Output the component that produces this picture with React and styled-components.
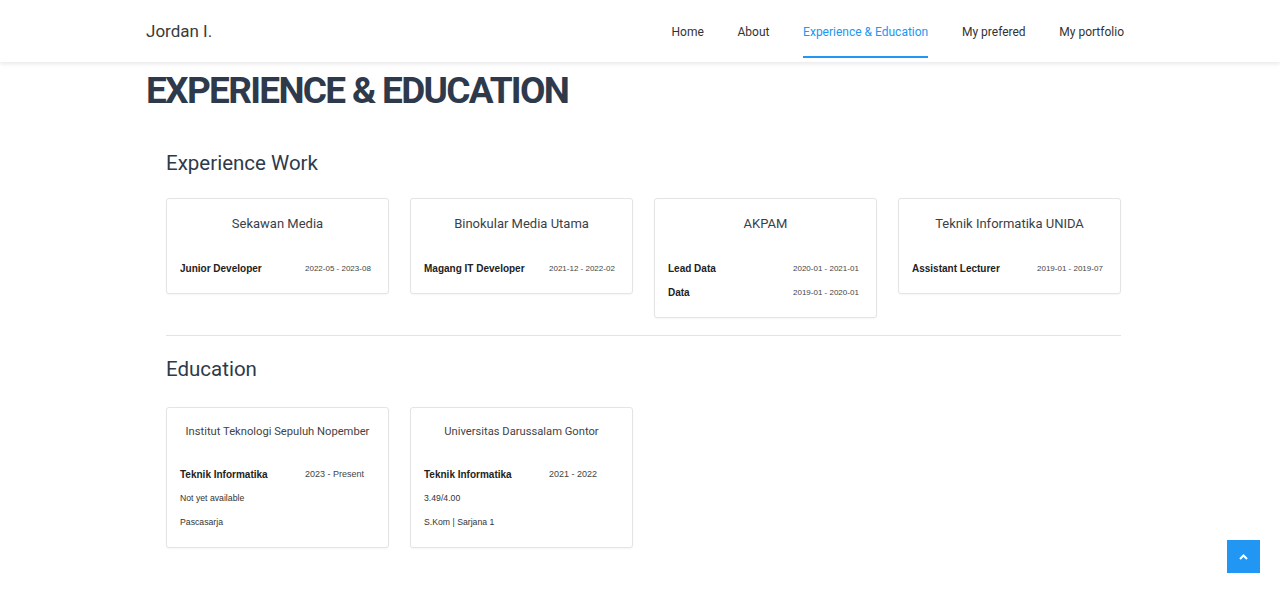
import React from "react";
import styled, { createGlobalStyle } from "styled-components";

const GlobalStyle = createGlobalStyle`
  html, body { margin: 0; padding: 0; background: #fff; }
  body { font-family: Roboto, "Liberation Sans", Arial, sans-serif; color: #333; }
  * { box-sizing: border-box; }
`;

const Header = styled.header`
  height: 62px;
  background: #fff;
  box-shadow: 0 2px 4px rgba(0, 0, 0, 0.09);
  position: relative;
  z-index: 2;
`;

const HeaderInner = styled.div`
  width: 978px;
  margin-left: 146px;
  height: 100%;
  display: flex;
  align-items: flex-start;
  justify-content: space-between;
`;

const Brand = styled.div`
  font-size: 17px;
  color: #3a3a3a;
  line-height: 62px;
`;

const Nav = styled.nav`
  display: flex;
  gap: 33.7px;
`;

const NavLink = styled.a`
  height: 58px;
  padding-top: 7px;
  display: flex;
  align-items: center;
  font-size: 12px;
  color: ${(p) => (p.$active ? "#2196f3" : "#333")};
  border-bottom: 2px solid ${(p) => (p.$active ? "#2196f3" : "transparent")};
  text-decoration: none;
  white-space: nowrap;
`;

const Main = styled.main`
  width: 978px;
  margin-left: 146px;
  padding-bottom: 60px;
`;

const PageTitle = styled.h1`
  margin: 6px 0 0;
  font-size: 37px;
  line-height: 46px;
  font-weight: 700;
  letter-spacing: -1.7px;
  color: #2e3a4b;
`;

const Section = styled.section`
  margin-left: 20px;
  width: 955px;
`;

const SectionTitle = styled.h2`
  margin: ${(p) => p.$mt} 0 ${(p) => p.$mb};
  font-size: 20.5px;
  line-height: 25px;
  font-weight: 400;
  color: #2e3a4b;
`;

const CardGrid = styled.div`
  display: grid;
  grid-template-columns: repeat(4, 223px);
  gap: 21px;
  align-items: start;
`;

const Card = styled.div`
  background: #fff;
  border: 1px solid #e4e4e4;
  border-radius: 3px;
  box-shadow: 0 1px 2px rgba(0, 0, 0, 0.04);
  padding: 16px 13px 18px;
`;

const CardTitle = styled.div`
  text-align: center;
  white-space: nowrap;
  font-size: ${(p) => (p.$small ? "11.2px" : "13px")};
  line-height: ${(p) => (p.$small ? "15px" : "17px")};
  color: ${(p) => (p.$small ? "#444" : "#3a3f48")};
  margin-bottom: ${(p) => (p.$small ? "28px" : "29px")};
`;

const Rows = styled.div`
  display: flex;
  flex-direction: column;
  gap: ${(p) => p.$gap};
`;

const Row = styled.div`
  display: grid;
  grid-template-columns: 125px 1fr;
  align-items: center;
  height: 14px;
  font-family: "Liberation Sans", Arial, sans-serif;
`;

const Label = styled.span`
  font-size: 10px;
  font-weight: 700;
  color: #222;
  white-space: nowrap;
`;

const DateText = styled.span`
  font-size: ${(p) => (p.$big ? "9px" : "8px")};
  color: #444;
  white-space: nowrap;
`;

const Note = styled.div`
  height: 14px;
  display: flex;
  align-items: center;
  font-family: "Liberation Sans", Arial, sans-serif;
  font-size: 8.7px;
  color: #333;
`;

const Divider = styled.hr`
  border: none;
  border-top: 1px solid #e3e3e3;
  margin: 17px 0 0;
`;

const ScrollTop = styled.button`
  position: fixed;
  right: 20px;
  bottom: 40px;
  width: 33px;
  height: 33px;
  border: none;
  background: #2196f3;
  display: flex;
  align-items: center;
  justify-content: center;
  padding: 0;
  cursor: pointer;
`;

const experience = [
  { name: "Sekawan Media", roles: [["Junior Developer", "2022-05 - 2023-08"]] },
  { name: "Binokular Media Utama", roles: [["Magang IT Developer", "2021-12 - 2022-02"]] },
  {
    name: "AKPAM",
    roles: [
      ["Lead Data", "2020-01 - 2021-01"],
      ["Data", "2019-01 - 2020-01"],
    ],
  },
  { name: "Teknik Informatika UNIDA", roles: [["Assistant Lecturer", "2019-01 - 2019-07"]] },
];

const education = [
  {
    name: "Institut Teknologi Sepuluh Nopember",
    major: "Teknik Informatika",
    period: "2023 - Present",
    notes: ["Not yet available", "Pascasarja"],
  },
  {
    name: "Universitas Darussalam Gontor",
    major: "Teknik Informatika",
    period: "2021 - 2022",
    notes: ["3.49/4.00", "S.Kom | Sarjana 1"],
  },
];

export default function App() {
  return (
    <>
      <GlobalStyle />
      <Header>
        <HeaderInner>
          <Brand>Jordan I.</Brand>
          <Nav>
            <NavLink href="#">Home</NavLink>
            <NavLink href="#">About</NavLink>
            <NavLink href="#" $active>
              Experience &amp; Education
            </NavLink>
            <NavLink href="#">My prefered</NavLink>
            <NavLink href="#">My portfolio</NavLink>
          </Nav>
        </HeaderInner>
      </Header>
      <Main>
        <PageTitle>EXPERIENCE &amp; EDUCATION</PageTitle>
        <Section>
          <SectionTitle $mt="37px" $mb="22px">
            Experience Work
          </SectionTitle>
          <CardGrid>
            {experience.map((c) => (
              <Card key={c.name}>
                <CardTitle>{c.name}</CardTitle>
                <Rows $gap="10px">
                  {c.roles.map(([r, d]) => (
                    <Row key={r}>
                      <Label>{r}</Label>
                      <DateText>{d}</DateText>
                    </Row>
                  ))}
                </Rows>
              </Card>
            ))}
          </CardGrid>
          <Divider />
          <SectionTitle $mt="21px" $mb="25px">
            Education
          </SectionTitle>
          <CardGrid>
            {education.map((e) => (
              <Card key={e.name}>
                <CardTitle $small>{e.name}</CardTitle>
                <Rows $gap="10px">
                  <Row>
                    <Label>{e.major}</Label>
                    <DateText $big>{e.period}</DateText>
                  </Row>
                  {e.notes.map((n) => (
                    <Note key={n}>{n}</Note>
                  ))}
                </Rows>
              </Card>
            ))}
          </CardGrid>
        </Section>
      </Main>
      <ScrollTop aria-label="Back to top">
        <svg width="9" height="6" viewBox="0 0 9 6">
          <path d="M1 5 L4.5 1.5 L8 5" fill="none" stroke="#fff" strokeWidth="2" />
        </svg>
      </ScrollTop>
    </>
  );
}
